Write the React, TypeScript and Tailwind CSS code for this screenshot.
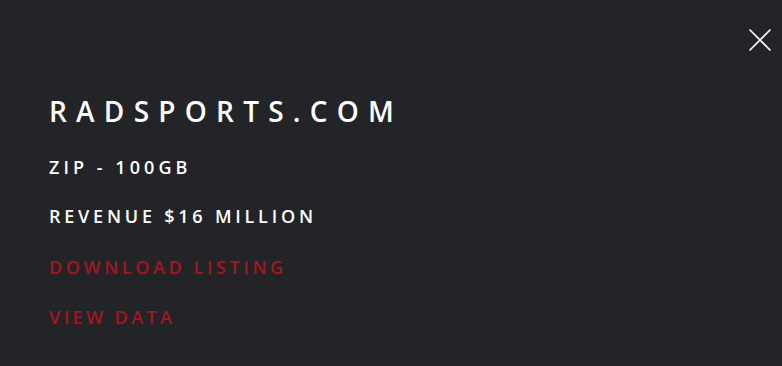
export default function App() {
  return (
    <div
      className="relative h-[366px] w-[782px] overflow-hidden bg-[#222428] text-white"
      style={{ fontFamily: '"Open Sans", "Noto Sans", sans-serif' }}
    >
      {/* Close */}
      <button className="absolute left-[748px] top-[28px] text-white">
        <svg width="24" height="24" viewBox="0 0 24 24" fill="none" stroke="currentColor" strokeWidth="1.6">
          <path d="M1.5 1.5 22.5 22.5M22.5 1.5 1.5 22.5" />
        </svg>
      </button>

      <div className="flex flex-col pl-[49px] pt-[92px]">
        <h1 className="text-[28px] font-semibold leading-[38px] tracking-[0.33em]">
          RADSPORTS.COM
        </h1>
        <p className="mt-[26px] text-[18px] font-semibold leading-[22px] tracking-[0.225em]">
          ZIP - 100GB
        </p>
        <p className="mt-[27px] text-[18px] font-semibold leading-[22px] tracking-[0.21em]">
          REVENUE $16 MILLION
        </p>
        <a className="mt-[29px] text-[18px] font-semibold leading-[22px] tracking-[0.2em] text-[#a8141c]">
          DOWNLOAD LISTING
        </a>
        <a className="mt-[28px] text-[18px] font-semibold leading-[22px] tracking-[0.19em] text-[#a8141c]">
          VIEW DATA
        </a>
      </div>
    </div>
  );
}
